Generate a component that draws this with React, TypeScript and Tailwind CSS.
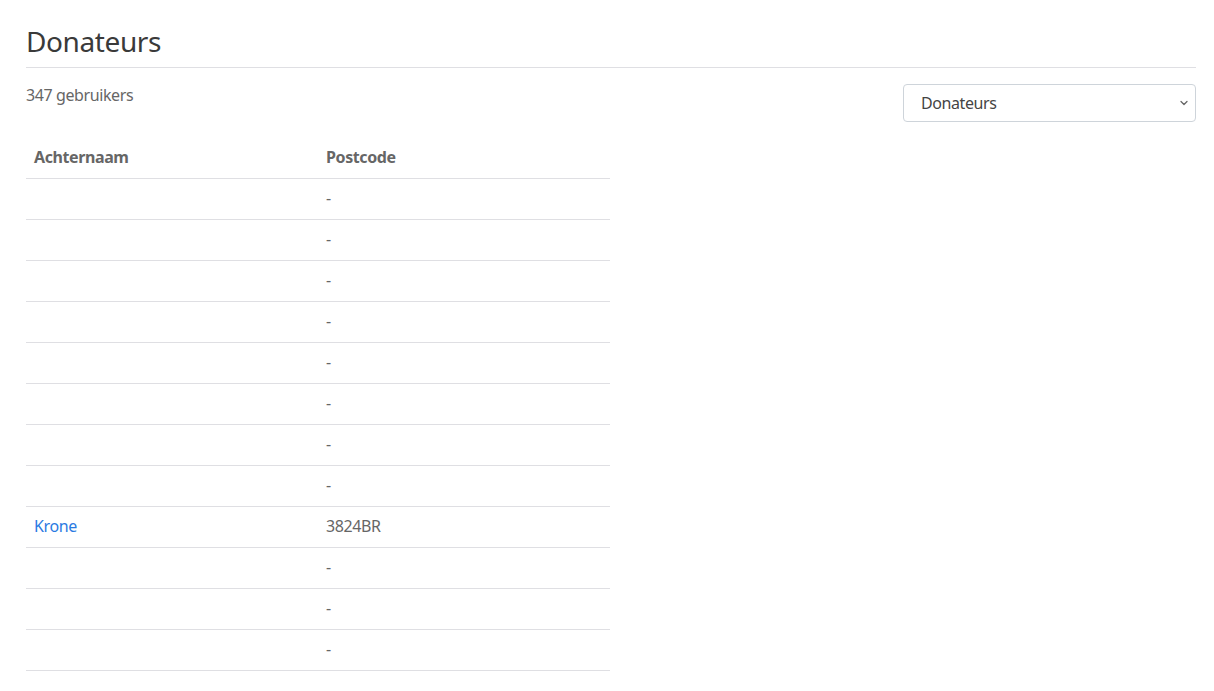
import React from 'react';
import { ChevronDown } from 'lucide-react';

interface Donor {
  id: number;
  lastName?: string;
  postcode?: string;
}

const donors: Donor[] = [
  { id: 1 },
  { id: 2 },
  { id: 3 },
  { id: 4 },
  { id: 5 },
  { id: 6 },
  { id: 7 },
  { id: 8 },
  { id: 9, lastName: 'Krone', postcode: '3824BR' },
  { id: 10 },
  { id: 11 },
  { id: 12 },
];

export default function App() {
  return (
    <div className="min-h-screen bg-white pl-[26px] pr-[18px] pt-[23px] text-[16px] tracking-[-0.025em] text-[#666] [font-family:'Noto_Sans',sans-serif]">
      {/* Page title */}
      <h1 className="border-b border-[#dfdfe3] pb-[8px] text-[28px] leading-[36px] text-[#3a3a3a]">
        Donateurs
      </h1>

      {/* Count + group filter */}
      <div className="mt-[16px] flex items-start justify-between">
        <p className="leading-[24px] -mt-[1px]">347 gebruikers</p>
        <div className="relative w-[293px]">
          <select className="h-[38px] w-full appearance-none rounded-[4px] border border-[#ced4da] bg-white pl-[17px] pr-8 text-[16px] tracking-[-0.025em] text-[#444]">
            <option>Donateurs</option>
          </select>
          <ChevronDown
            className="pointer-events-none absolute right-[6px] top-[13px] h-[12px] w-[12px] text-[#666]"
            strokeWidth={2.5}
          />
        </div>
      </div>

      {/* Users table */}
      <table className="mt-[16px] w-[584px] border-collapse">
        <thead>
          <tr className="border-b border-[#dfdfe3]">
            <th className="w-1/2 px-[8px] pt-[7px] pb-[9px] text-left font-bold leading-[24px] text-[#666]">Achternaam</th>
            <th className="w-1/2 px-[8px] pt-[7px] pb-[9px] text-left font-bold leading-[24px] text-[#666]">Postcode</th>
          </tr>
        </thead>
        <tbody>
          {donors.map((d) => (
            <tr key={d.id} className="border-b border-[#dfdfe3]">
              <td className="h-[41px] px-[8px] pt-[7px] pb-[9px] leading-[24px]">
                {d.lastName && <a className="text-[#2a7ae2]">{d.lastName}</a>}
              </td>
              <td className="h-[41px] px-[8px] pt-[7px] pb-[9px] leading-[24px]">{d.postcode ?? '-'}</td>
            </tr>
          ))}
        </tbody>
      </table>
    </div>
  );
}
